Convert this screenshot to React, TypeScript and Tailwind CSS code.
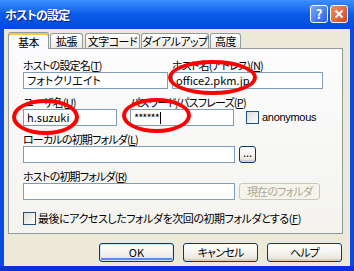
import React from "react";

const font = "font-['Noto_Sans_CJK_JP','Noto_Sans',sans-serif] [font-feature-settings:'palt'] whitespace-nowrap";

function XpButton({
  children,
  className = "",
  isDefault = false,
  disabled = false,
}: {
  children: React.ReactNode;
  className?: string;
  isDefault?: boolean;
  disabled?: boolean;
}) {
  if (disabled) {
    return (
      <div
        className={`flex items-center justify-center rounded-[3px] border border-[#C9C7BA] bg-[#F5F4EA] text-[11px] tracking-[-0.8px] text-[#ACA899] ${className}`}
      >
        {children}
      </div>
    );
  }
  return (
    <div
      className={`flex items-center justify-center rounded-[3px] border border-[#003C74] bg-gradient-to-b from-white via-[#F5F4EF] to-[#E3E1D6] text-[11px] text-black ${
        isDefault
          ? "shadow-[inset_0_0_0_1px_#CEE7FF,inset_0_-2px_0_1px_#6982EE]"
          : "shadow-[inset_0_-2px_0_#D6D0C5]"
      } ${className}`}
    >
      {children}
    </div>
  );
}

function Checkbox() {
  return (
    <div className="h-[13px] w-[13px] shrink-0 border border-[#1C5180] bg-gradient-to-br from-[#DCDCD7] to-white" />
  );
}

function Field({ className = "", children }: { className?: string; children?: React.ReactNode }) {
  return (
    <div
      className={`flex h-[17px] items-center border border-[#7F9DB9] bg-white px-[3px] text-[11px] leading-none text-black ${className}`}
    >
      {children}
    </div>
  );
}

function Label({ children, className = "" }: { children: React.ReactNode; className?: string }) {
  return (
    <div className={`h-[14px] text-[11px] leading-[14px] tracking-[-0.8px] text-black ${className}`}>{children}</div>
  );
}

function Tab({ label, active = false, className = "" }: { label: string; active?: boolean; className?: string }) {
  if (active) {
    return (
      <div
        className={`relative z-10 -mb-px flex h-[17px] items-start justify-center rounded-t-[3px] border border-b-0 border-[#919B9C] bg-[#FCFCFE] pt-[2px] text-[11px] leading-[14px] tracking-[-0.5px] shadow-[inset_0_2px_0_#FFC83C] ${className}`}
      >
        {label}
      </div>
    );
  }
  return (
    <div
      className={`flex h-[15px] items-center justify-center rounded-t-[3px] border border-b-0 border-[#919B9C] bg-gradient-to-b from-white to-[#ECEBE6] text-[11px] leading-[14px] tracking-[-0.5px] ${className}`}
    >
      {label}
    </div>
  );
}

export default function App() {
  return (
    <div className={`relative flex h-[271px] w-[354px] flex-col overflow-hidden bg-[#0A4BE0] ${font}`}>
      {/* title bar */}
      <div className="flex h-[29px] shrink-0 items-center justify-between bg-gradient-to-b from-[#3C8EFF] via-[#0A5CE8] to-[#0248DC] pl-[5px] pr-[6px]">
        <span className="text-[12px] font-bold tracking-[-0.8px] text-white [text-shadow:1px_1px_0_#0A1E8C]">
          ホストの設定
        </span>
        <div className="flex gap-[2px] pb-[2px]">
          <div className="flex h-[18px] w-[18px] items-center justify-center rounded-[3px] border border-white bg-gradient-to-br from-[#76A6FF] to-[#2B5FE0] text-[13px] font-bold leading-none text-white">
            ?
          </div>
          <div className="flex h-[18px] w-[18px] items-center justify-center rounded-[3px] border border-white bg-gradient-to-br from-[#F28E6A] to-[#D2461E]">
            <svg width="10" height="10" viewBox="0 0 10 10">
              <path d="M1.5 1.5 L8.5 8.5 M8.5 1.5 L1.5 8.5" stroke="white" strokeWidth="2" />
            </svg>
          </div>
        </div>
      </div>

      {/* body */}
      <div className="mx-[4px] flex flex-1 flex-col bg-[#ECE9D8] pl-[4px] pr-[7px] pt-[3px]">
        {/* tabs */}
        <div className="flex h-[16px] items-end">
          <Tab label="基本" active className="w-[41px]" />
          <Tab label="拡張" className="ml-[1px] w-[33px]" />
          <Tab label="文字コード" className="ml-[2px] w-[55px]" />
          <Tab label="ダイアルアップ" className="ml-[1px] w-[68px]" />
          <Tab label="高度" className="ml-[1px] w-[31px]" />
        </div>

        {/* panel */}
        <div className="flex h-[186px] flex-col border border-[#919B9C] bg-gradient-to-b from-[#FCFCFE] to-[#F4F3EE] pl-[14px] pt-[9px]">
          <div className="flex gap-[4px]">
            <div className="flex flex-col">
              <Label>ホストの設定名(<u>T</u>)</Label>
              <Field className="w-[145px]">フォトクリエイト</Field>
            </div>
            <div className="flex flex-col">
              <Label>ホスト名(アドレス)(<u>N</u>)</Label>
              <Field className="w-[151px]">office2.pkm.jp</Field>
            </div>
          </div>

          <div className="mt-[6px] flex items-end">
            <div className="flex w-[94px] flex-col">
              <Label>ユーザ名(<u>U</u>)</Label>
              <Field className="w-[94px]">h.suzuki</Field>
            </div>
            <div className="ml-[13px] flex w-[104px] flex-col">
              <Label className="tracking-[-0.3px]">パスワード/パスフレーズ(<u>P</u>)</Label>
              <Field className="w-[104px]">
                <span className="tracking-[-1px]">******</span>
                <span className="ml-[1px] h-[12px] w-px bg-black" />
              </Field>
            </div>
            <div className="mb-[2px] ml-[12px] flex items-center gap-[3px]">
              <Checkbox />
              <span className="font-['Liberation_Sans',sans-serif] text-[11px] leading-none tracking-[-0.3px]">
                anonymous
              </span>
            </div>
          </div>

          <Label className="mt-[6px]">ローカルの初期フォルダ(<u>L</u>)</Label>
          <div className="flex gap-[4px]">
            <Field className="w-[212px]" />
            <XpButton className="h-[17px] w-[17px] pb-[4px] text-[10px]">...</XpButton>
          </div>

          <Label className="mt-[6px]">ホストの初期フォルダ(<u>R</u>)</Label>
          <div className="flex gap-[4px]">
            <Field className="w-[212px]" />
            <XpButton disabled className="h-[17px] w-[81px]">
              現在のフォルダ
            </XpButton>
          </div>

          <div className="mt-[11px] flex items-center gap-[2px]">
            <Checkbox />
            <span className="text-[11px] leading-[14px] tracking-[-0.45px]">
              最後にアクセスしたフォルダを次回の初期フォルダとする(<u>F</u>)
            </span>
          </div>
        </div>

        {/* buttons */}
        <div className="mt-[9px] flex justify-end gap-[9px] pr-[1px]">
          <XpButton isDefault className="h-[19px] w-[75px]">
            OK
          </XpButton>
          <XpButton className="h-[19px] w-[75px] tracking-[-0.8px]">キャンセル</XpButton>
          <XpButton className="h-[19px] w-[75px] tracking-[-0.8px]">ヘルプ</XpButton>
        </div>
      </div>
      <div className="h-[5px] shrink-0 bg-[#0831D9]" />

      {/* red annotation ellipses */}
      <div className="pointer-events-none absolute left-[168px] top-[60px] h-[35px] w-[89px] rounded-[50%] border-[4px] border-[#FF0000]" />
      <div className="pointer-events-none absolute left-[12px] top-[99px] h-[36px] w-[67px] rounded-[50%] border-[4px] border-[#FF0000]" />
      <div className="pointer-events-none absolute left-[122px] top-[98px] h-[35px] w-[69px] rounded-[50%] border-[4px] border-[#FF0000]" />
    </div>
  );
}
